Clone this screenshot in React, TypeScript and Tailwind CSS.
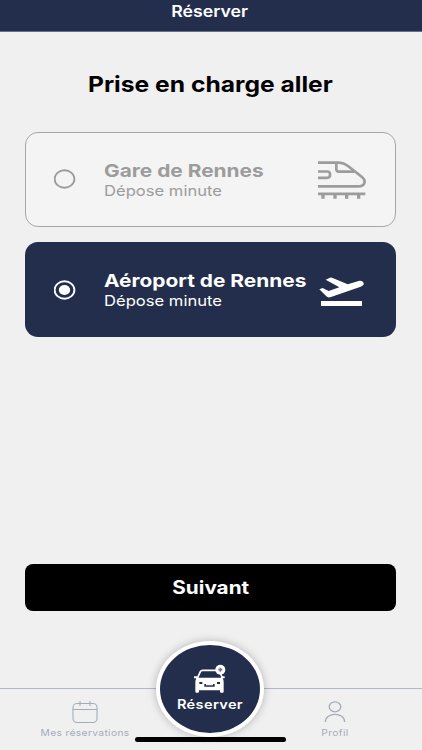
import React from "react";

function TrainIcon() {
  return (
    <svg className="relative top-[1px] block h-[40px] w-[50px]" viewBox="306 120 150 120" fill="none" stroke="#9c9c9c" strokeWidth="8">
      <path d="M309 128H373C385 128 391 132 399 138L441 171C455 183 449 199 430 199H309" />
      <path d="M364 128V148Q364 155 372 155H417" />
      <path d="M309 154.500H336Q345 154.500 345 162V166Q345 173.500 336 173.500H309" />
      <path d="M309 221.500H451" />
      <path d="M324 222V236M360 222V236M395 222V236M431 222V236" strokeWidth="10" />
    </svg>
  );
}

function PlaneIcon() {
  return (
    <svg className="relative top-[1px] block h-[32px] w-[50px]" viewBox="306 120 150 96" fill="#ffffff">
      <path d="M332 134L345 128Q349 127 353 129L398 148L431 138C438 136 445 139 446 145C447 150 443 153 437 155L348 186Q339 189 334 184L313 163L323 159L341 168L373 157Z" />
      <path d="M318 198H441V213H318Z" />
    </svg>
  );
}

function CarIcon() {
  return (
    <svg className="block h-[30px] w-[34px]" viewBox="146 100 102 90" fill="none">
      <path d="M159 143L168 123Q170 119 175 119H217M229 130L235 143" stroke="#fff" strokeWidth="5" />
      <path
        fill="#fff"
        fillRule="evenodd"
        d="M149 137H158L161 141H229L232 137H241V143H235Q238 148 238 154V183Q238 186 235 186H230Q227 186 227 183V179H164V183Q164 186 161 186H156Q153 186 153 183V154Q153 148 156 143H149ZM165 154V160H174V154ZM218 154V160H227V154ZM180 160V168H211V160H206V164H185V160Z"
      />
      <circle cx="228" cy="117" r="15" fill="#fff" />
      <path d="M228 111V123M222 117H234" stroke="#77788a" strokeWidth="5" />
    </svg>
  );
}

function Radio({ checked }: { checked?: boolean }) {
  return (
    <svg className="block h-[20px] w-[22px]" viewBox="0 0 22 20" fill="none">
      <ellipse cx="10.500" cy="10" rx="9.900" ry="8.700" stroke={checked ? "#fff" : "#9c9c9c"} strokeWidth="1.900" />
      {checked && <ellipse cx="10.500" cy="10" rx="5.700" ry="5" fill="#fff" />}
    </svg>
  );
}

export default function App() {
  return (
    <div className="flex h-[750px] w-[422px] flex-col overflow-hidden bg-[#f0f0f0] font-['Inter','Liberation_Sans',sans-serif]">
      <header className="flex h-8 shrink-0 justify-center border-b border-[#66708a] bg-[#232e4c] pr-[2px] text-white">
        <h1 className="h-[24px] w-max origin-center scale-x-[1.14] whitespace-nowrap text-[15.5px] leading-[23px] font-semibold">Réserver</h1>
      </header>
      <main className="flex h-[656px] shrink-0 flex-col px-[24.5px]">
        <div className="mt-[36px] flex h-8 justify-center pr-[2px]">
          <h2 className="w-max scale-x-[1.14] whitespace-nowrap text-[21.6px] leading-8 font-bold text-black">Prise en charge aller</h2>
        </div>
        <div className="mt-[31.5px] flex flex-col gap-[15.5px]">
          <button className="flex h-[95px] w-[371.5px] items-center rounded-[13px] border border-[#a6a6a6] bg-[#f4f4f4] pl-[28.5px] text-left text-[#9c9c9c]">
            <Radio />
            <span className="ml-[28px] flex w-[213px] flex-col pt-[3px]">
              <b className="w-max origin-left scale-x-[1.16] text-[18px] leading-[20px] font-bold">Gare de Rennes</b>
              <span className="w-max origin-left scale-x-[1.13] text-[14.7px] leading-[20px]">Dépose minute</span>
            </span>
            <TrainIcon />
          </button>
          <button className="flex h-[95px] w-[371.5px] items-center rounded-[13px] bg-[#232e4c] pl-[29.5px] text-left text-white">
            <Radio checked />
            <span className="ml-[28px] flex w-[213px] flex-col pt-[3px]">
              <b className="w-max origin-left scale-x-[1.16] text-[18px] leading-[20px] font-bold">Aéroport de Rennes</b>
              <span className="w-max origin-left scale-x-[1.13] text-[14.7px] leading-[20px]">Dépose minute</span>
            </span>
            <PlaneIcon />
          </button>
        </div>
        <button className="mt-auto mb-[77px] flex h-[47px] w-[371.5px] items-center justify-center rounded-[8px] bg-black text-white">
          <span className="scale-x-[1.14] text-[18.2px] font-bold">Suivant</span>
        </button>
      </main>
      <nav className="relative flex h-[62px] shrink-0 border-t border-[#b1b7c4] text-[#a4acbc]">
        <div className="flex w-[170px] flex-col items-center pt-[11px]">
          <svg className="block h-[24px] w-[28px]" viewBox="0 0 28 24" fill="none" stroke="currentColor" strokeWidth="1.100">
            <rect x="2" y="3.500" width="24" height="19" rx="4" />
            <path d="M2 9.500H26M9 1V6M19 1V6" />
          </svg>
          <span className="mt-[3px] scale-x-[1.14] text-[9px] leading-[12px] tracking-[0.3px] whitespace-nowrap">Mes réservations</span>
        </div>
        <div className="ml-auto flex w-[174px] flex-col items-center pt-[11px]">
          <svg className="block h-[24px] w-[24px]" viewBox="0 0 24 24" fill="none" stroke="currentColor" strokeWidth="1.300">
            <ellipse cx="12" cy="6.800" rx="5.800" ry="5" />
            <path d="M2.300 22C2.300 11.700 21.700 11.700 21.700 22" />
          </svg>
          <span className="mt-[3px] scale-x-[1.14] text-[9px] leading-[12px] tracking-[0.3px]">Profil</span>
        </div>
        <button className="absolute top-[-48px] left-[156px] flex h-[96px] w-[108px] flex-col items-center rounded-[50%] border-4 border-white bg-[#232e4c] pt-[19px] text-white shadow-[0_0_9px_rgba(0,0,0,0.25)]">
          <CarIcon />
          <span className="mt-[3px] scale-x-[1.14] text-[12.8px] leading-[16px] font-semibold tracking-[0.3px]">Réserver</span>
        </button>
        <div className="absolute top-[48px] left-[135px] h-[5px] w-[151px] rounded-full bg-black" />
      </nav>
    </div>
  );
}
